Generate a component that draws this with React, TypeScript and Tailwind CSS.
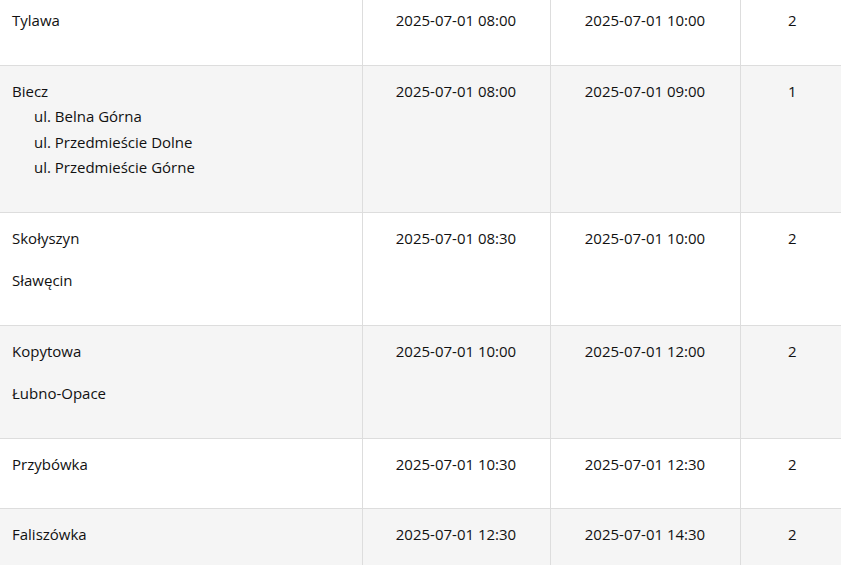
const rows = [
  { places: [{ name: "Tylawa" }], start: "2025-07-01 08:00", end: "2025-07-01 10:00", count: 2 },
  {
    places: [{ name: "Biecz", streets: ["ul. Belna Górna", "ul. Przedmieście Dolne", "ul. Przedmieście Górne"] }],
    start: "2025-07-01 08:00",
    end: "2025-07-01 09:00",
    count: 1,
  },
  { places: [{ name: "Skołyszyn" }, { name: "Sławęcin" }], start: "2025-07-01 08:30", end: "2025-07-01 10:00", count: 2 },
  { places: [{ name: "Kopytowa" }, { name: "Łubno-Opace" }], start: "2025-07-01 10:00", end: "2025-07-01 12:00", count: 2 },
  { places: [{ name: "Przybówka" }], start: "2025-07-01 10:30", end: "2025-07-01 12:30", count: 2 },
  { places: [{ name: "Faliszówka" }], start: "2025-07-01 12:30", end: "2025-07-01 14:30", count: 2 },
];

type Place = { name: string; streets?: string[] };

export default function App() {
  return (
    <div className="h-[565px] w-[841px] overflow-hidden bg-white">
      <table
        className="-mt-[5px] w-[844px] table-fixed border-collapse text-[15px] leading-[25.5px] text-[#111111]"
        style={{ fontFamily: '"Open Sans", "Noto Sans", sans-serif' }}
      >
        <colgroup>
          <col className="w-[362px]" />
          <col className="w-[188px]" />
          <col className="w-[190px]" />
          <col className="w-[104px]" />
        </colgroup>
        <tbody>
          {rows.map((r, i) => (
            <tr key={i} className={i % 2 === 1 ? "bg-[#f5f5f5]" : "bg-white"}>
              <td className="border-b border-[#dddddd] px-3 pt-[13px] pb-[14px] align-top">
                {r.places.map((p: Place) => (
                  <div key={p.name} className="mb-[17px]">
                    <div>{p.name}</div>
                    {p.streets && (
                      <ul className="pl-[22px]">
                        {p.streets.map((s) => (
                          <li key={s}>{s}</li>
                        ))}
                      </ul>
                    )}
                  </div>
                ))}
              </td>
              <td className="border-b border-l border-[#dddddd] px-3 pt-[13px] align-top text-center">{r.start}</td>
              <td className="border-b border-l border-[#dddddd] px-3 pt-[13px] align-top text-center">{r.end}</td>
              <td className="border-b border-l border-[#dddddd] px-3 pt-[13px] align-top text-center">{r.count}</td>
            </tr>
          ))}
        </tbody>
      </table>
    </div>
  );
}
